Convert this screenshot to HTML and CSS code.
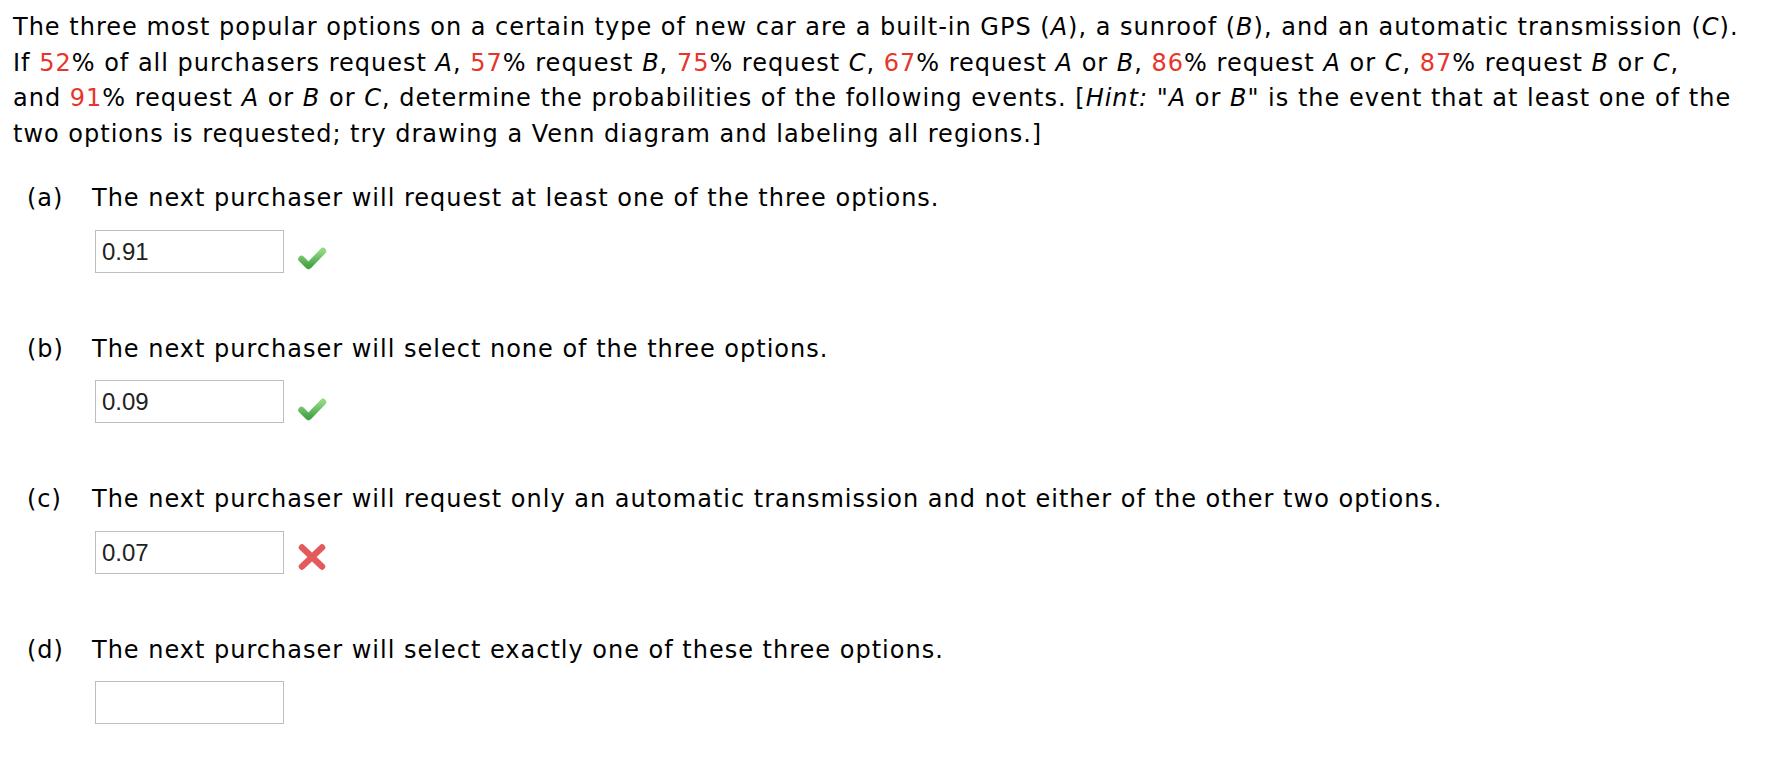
FILE: index.html
```html
<!DOCTYPE html>
<html>
<head>
<meta charset="utf-8">
<link rel="stylesheet" href="styles.css">
</head>
<body>
<div class="question">
  <p class="stem">The three most popular options on a certain type of new car are a built-in GPS (<i>A</i>), a sunroof (<i>B</i>), and an automatic transmission (<i>C</i>).<br>If <span class="num">52</span>% of all purchasers request <i>A</i>, <span class="num">57</span>% request <i>B</i>, <span class="num">75</span>% request <i>C</i>, <span class="num">67</span>% request <i>A</i> or <i>B</i>, <span class="num">86</span>% request <i>A</i> or <i>C</i>, <span class="num">87</span>% request <i>B</i> or <i>C</i>,<br>and <span class="num">91</span>% request <i>A</i> or <i>B</i> or <i>C</i>, determine the probabilities of the following events. [<i>Hint:</i> "<i>A</i> or <i>B</i>" is the event that at least one of the<br>two options is requested; try drawing a Venn diagram and labeling all regions.]</p>

  <div class="part">
    <div class="prompt"><span class="letter">(a)</span><span class="text">The next purchaser will request at least one of the three options.</span></div>
    <div class="answer">
      <div class="box">0.91</div>
      <svg class="mark check" width="30" height="26" viewBox="0 0 30 26"><defs><linearGradient id="g1" x1="0" y1="0" x2="0" y2="1"><stop offset="0" stop-color="#93d684"/><stop offset="1" stop-color="#45a445"/></linearGradient></defs><path d="M4.5 14 L11.5 21 L26 6" fill="none" stroke="url(#g1)" stroke-width="6.5" stroke-linecap="round" stroke-linejoin="round"/></svg>
    </div>
  </div>

  <div class="part">
    <div class="prompt"><span class="letter">(b)</span><span class="text">The next purchaser will select none of the three options.</span></div>
    <div class="answer">
      <div class="box">0.09</div>
      <svg class="mark check" width="30" height="26" viewBox="0 0 30 26"><defs><linearGradient id="g2" x1="0" y1="0" x2="0" y2="1"><stop offset="0" stop-color="#93d684"/><stop offset="1" stop-color="#45a445"/></linearGradient></defs><path d="M4.5 14 L11.5 21 L26 6" fill="none" stroke="url(#g2)" stroke-width="6.5" stroke-linecap="round" stroke-linejoin="round"/></svg>
    </div>
  </div>

  <div class="part">
    <div class="prompt"><span class="letter">(c)</span><span class="text">The next purchaser will request only an automatic transmission and not either of the other two options.</span></div>
    <div class="answer">
      <div class="box">0.07</div>
      <svg class="mark cross" width="30" height="28" viewBox="0 0 30 28"><path d="M5 4.5 L25 23.5 M25 4.5 L5 23.5" fill="none" stroke="#e35a5a" stroke-width="6.5" stroke-linecap="round"/></svg>
    </div>
  </div>

  <div class="part">
    <div class="prompt"><span class="letter">(d)</span><span class="text">The next purchaser will select exactly one of these three options.</span></div>
    <div class="answer">
      <div class="box"></div>
    </div>
  </div>
</div>
</body>
</html>
```
FILE: styles.css
```css
html, body {
  margin: 0;
  padding: 0;
  background: #ffffff;
}
body {
  font-family: "DejaVu Sans", Verdana, sans-serif;
  font-size: 24px;
  letter-spacing: 1px;
  line-height: 35.5px;
  color: #000000;
}
.question {
  padding: 10px 0 0 13px;
  width: 1771px;
}
.stem {
  margin: 0;
  white-space: nowrap;
}
.num {
  color: #e8352b;
}
.part {
  padding-left: 14px;
  margin-top: 29px;
}
.part + .part {
  margin-top: 59px;
}
.prompt {
  display: flex;
}
.letter {
  width: 65px;
  flex: none;
}
.answer {
  display: flex;
  align-items: center;
  gap: 13px;
  margin-top: 13px;
  padding-left: 68px;
}
.box {
  box-sizing: border-box;
  width: 189px;
  height: 43px;
  border: 1px solid #bdbdbd;
  font-family: "Liberation Sans", Arial, sans-serif;
  font-size: 24px;
  letter-spacing: 0;
  line-height: 41px;
  padding-left: 6px;
  color: #222222;
}
.mark {
  display: block;
}
.check {
  margin-top: 14px;
}
.cross {
  margin-top: 10px;
}
```
